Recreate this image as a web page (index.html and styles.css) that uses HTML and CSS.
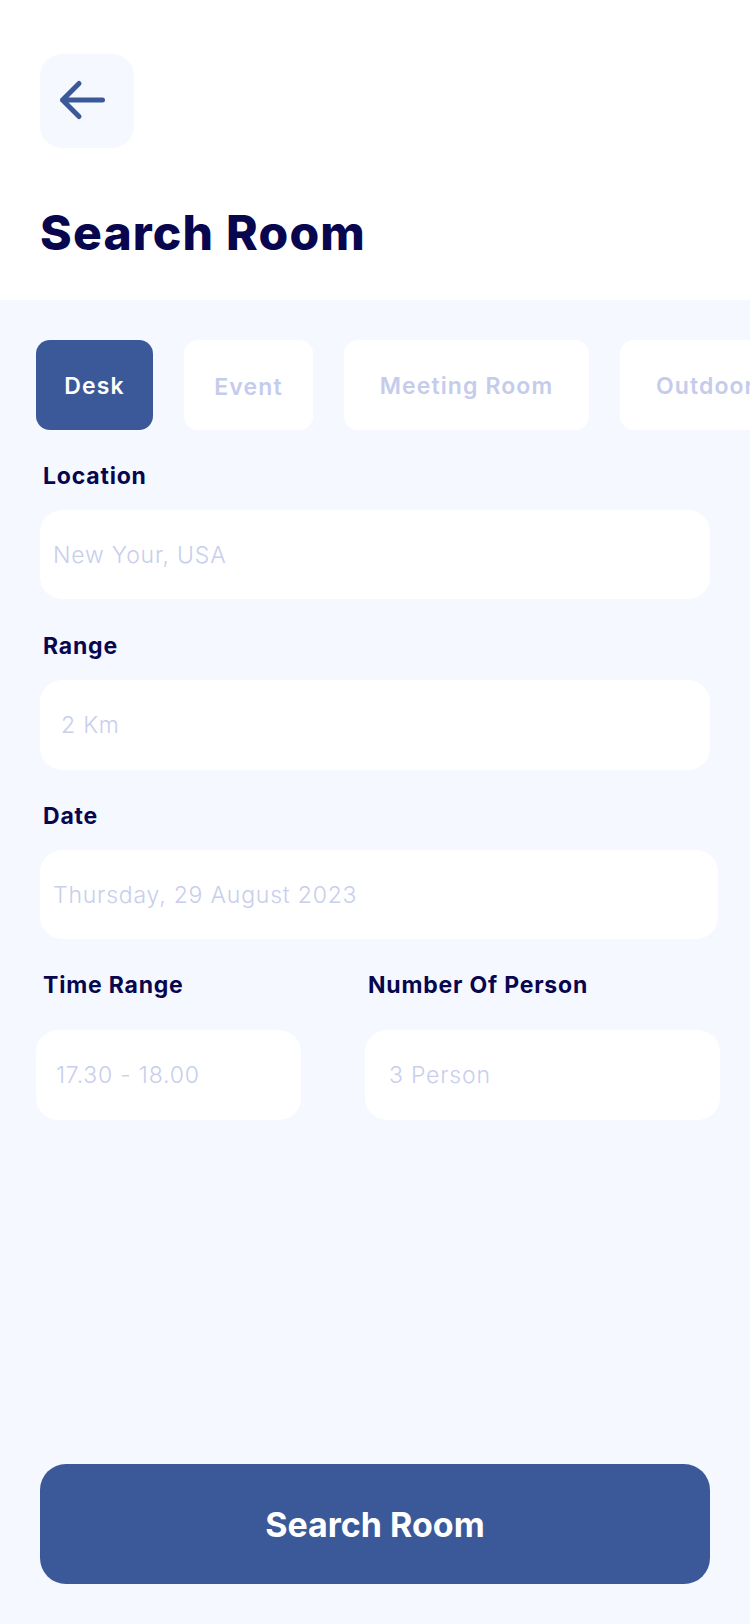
FILE: index.html
```html
<!DOCTYPE html>
<html lang="en">
<head>
<meta charset="utf-8">
<title>Search Room</title>
<link rel="stylesheet" href="styles.css">
</head>
<body>
<div class="screen">
  <header class="header">
    <button class="back" aria-label="Back">
      <svg width="94" height="94" viewBox="0 0 94 94" fill="none">
        <path d="M62.5 46H22.5M39 29.5L22.5 46L39 62.5" stroke="#3B5998" stroke-width="5" stroke-linecap="round" stroke-linejoin="round"/>
      </svg>
    </button>
    <h1 class="title">Search Room</h1>
  </header>
  <main class="content">
    <div class="tabs">
      <div class="tab tab-active tab-desk">Desk</div>
      <div class="tab tab-event">Event</div>
      <div class="tab tab-meeting">Meeting Room</div>
      <div class="tab tab-outdoor">Outdoor</div>
    </div>
    <div class="field field-location">
      <div class="label">Location</div>
      <div class="input input-location">New Your, USA</div>
    </div>
    <div class="field field-range">
      <div class="label">Range</div>
      <div class="input input-range">2 Km</div>
    </div>
    <div class="field field-date">
      <div class="label">Date</div>
      <div class="input input-date">Thursday, 29 August 2023</div>
    </div>
    <div class="row">
      <div class="field col-time">
        <div class="label label-row">Time Range</div>
        <div class="input input-time">17.30 - 18.00</div>
      </div>
      <div class="field col-person">
        <div class="label label-row">Number Of Person</div>
        <div class="input input-person">3 Person</div>
      </div>
    </div>
    <div class="spacer"></div>
    <button class="submit">Search Room</button>
  </main>
</div>
</body>
</html>
```

FILE: styles.css
```css
* { box-sizing: border-box; }
html, body { margin: 0; padding: 0; }
body {
  width: 750px;
  height: 1624px;
  overflow: hidden;
  background: #F5F8FE;
  font-family: Inter, "Noto Sans", sans-serif;
}
.screen {
  display: flex;
  flex-direction: column;
  height: 1624px;
}
.header {
  background: #FFFFFF;
  height: 300px;
  padding: 54px 0 0 40px;
}
.back {
  width: 94px;
  height: 94px;
  border: none;
  border-radius: 22px;
  background: #F5F8FE;
  padding: 0;
  display: block;
}
.back svg { display: block; }
.title {
  margin: 56px 0 0 0;
  font-size: 48px;
  line-height: 58px;
  font-weight: 800;
  color: #07064F;
  letter-spacing: 1.2px;
}
.content {
  flex: 1;
  display: flex;
  flex-direction: column;
  padding-top: 40px;
}
.tabs {
  display: flex;
  gap: 31px;
  padding-left: 36px;
  overflow: hidden;
  white-space: nowrap;
}
.tab {
  flex: none;
  height: 90px;
  border-radius: 14px;
  background: #FFFFFF;
  color: #C5CCEB;
  font-size: 23px;
  font-weight: 600;
  letter-spacing: 1.1px;
  display: flex;
  align-items: center;
  justify-content: center;
  padding-top: 2px;
}
.tab-desk { width: 117px; }
.tab-event { width: 129px; padding-top: 4px; }
.tab-meeting { width: 245px; }
.tab-outdoor { width: 150px; justify-content: flex-start; padding-left: 36px; }
.tab-active {
  background: #3B5998;
  color: #FFFFFF;
}
.field {
  display: flex;
  flex-direction: column;
  padding-left: 40px;
}
.field-location { margin-top: 32px; }
.field-range { margin-top: 33px; }
.field-date { margin-top: 32px; }
.label {
  font-size: 23px;
  line-height: 28px;
  font-weight: 700;
  color: #07064F;
  letter-spacing: 0.8px;
  padding-left: 3px;
  margin-bottom: 20px;
}
.input {
  height: 89px;
  border-radius: 22px;
  background: #FFFFFF;
  display: flex;
  align-items: center;
  font-size: 23px;
  font-weight: 300;
  letter-spacing: 0.8px;
  color: #C8CEEC;
  padding-left: 13px;
}
.input-location { width: 670px; }
.input-range { width: 670px; padding-left: 21px; height: 90px; }
.input-date { width: 678px; }
.row {
  display: flex;
  margin-top: 32px;
}
.col-time { padding-left: 36px; width: 301px; }
.col-time .label { padding-left: 7px; }
.col-person { padding-left: 64px; }
.label-row { margin-bottom: 31px; }
.input-time { width: 265px; height: 90px; padding-left: 20px; }
.input-person { width: 355px; height: 90px; padding-left: 24px; }
.col-person .label { padding-left: 3px; }
.spacer { flex: 1; }
.submit {
  margin: 0 0 40px 40px;
  width: 670px;
  height: 120px;
  border: none;
  border-radius: 26px;
  background: #3B5998;
  color: #FFFFFF;
  font-family: Inter, "Noto Sans", sans-serif;
  font-size: 34px;
  font-weight: 700;
  padding: 0;
}
```
